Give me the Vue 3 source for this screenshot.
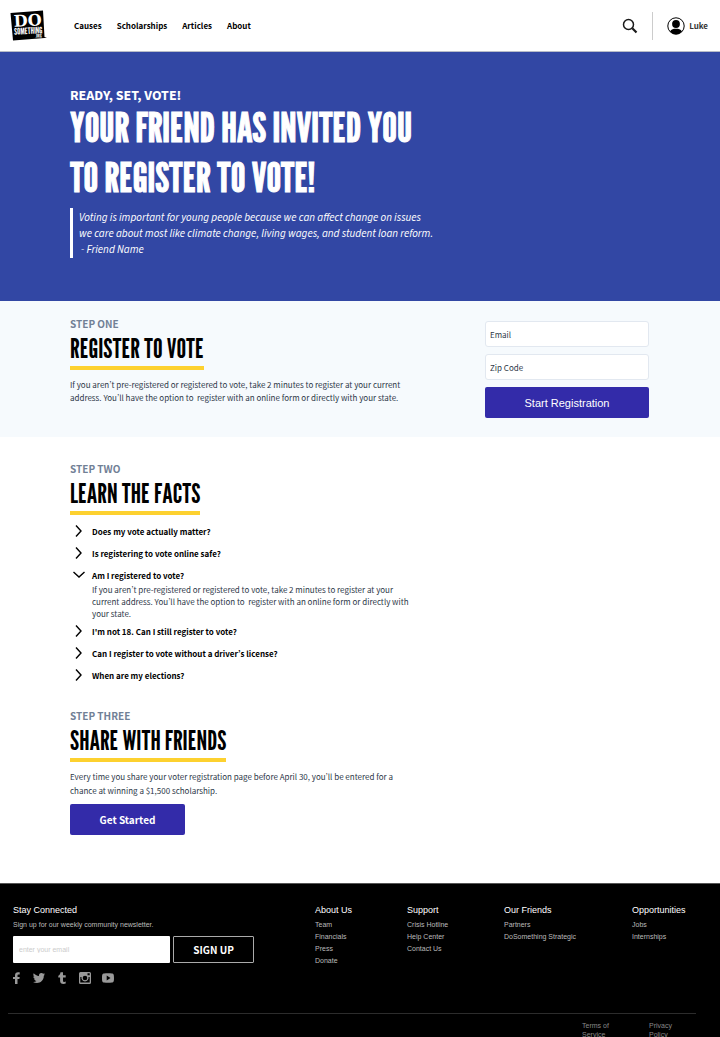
<script setup>
import { ref } from 'vue'

const navLinks = ['Causes', 'Scholarships', 'Articles', 'About']

const questions = [
  { title: 'Does my vote actually matter?' },
  { title: 'Is registering to vote online safe?' },
  {
    title: 'Am I registered to vote?',
    answer:
      'If you aren’t pre-registered or registered to vote, take 2 minutes to register at your current address. You’ll have the option to\u00a0 register with an online form or directly with your state.',
  },
  { title: "I'm not 18. Can I still register to vote?" },
  { title: 'Can I register to vote without a driver’s license?' },
  { title: 'When are my elections?' },
]
const openIndex = ref(2)
const toggle = (i) => {
  openIndex.value = openIndex.value === i ? -1 : i
}

const columns = [
  { title: 'About Us', links: ['Team', 'Financials', 'Press', 'Donate'] },
  { title: 'Support', links: ['Crisis Hotline', 'Help Center', 'Contact Us'] },
  { title: 'Our Friends', links: ['Partners', 'DoSomething Strategic'] },
  { title: 'Opportunities', links: ['Jobs', 'Internships'] },
]

const socials = [
  { name: 'Facebook', path: 'M5 12V7H3V5h2V3.500C5 1.500 6.200.300 8 .300h1.700v2.200H8.500c-.800 0-1 .400-1 1V5h2.200l-.300 2H7.500v5z' },
  { name: 'Twitter', path: 'M12 2.500l-1.200 1.300C10.900 8.500 7.500 11 4 11 2.500 11 1.200 10.600 0 9.900c1.300.100 2.600-.300 3.500-1C2.300 8.800 1.500 8 1.200 7h1.100C1 6.600.300 5.600.300 4.400l1.100.300C.300 3.800 0 2.500.700 1.300 2 2.900 3.800 3.800 6 3.900 5.700 2.200 6.900 1 8.400 1c.700 0 1.400.300 1.800.800l1.600-.600-1 1.400z' },
  { name: 'Tumblr', path: 'M4.500.200h2.500v3h2.700v2.300H7v2.900c0 1.200.600 1.500 1.300 1.500.500 0 1-.200 1.400-.400v2c-.600.300-1.300.500-2.200.500-2.200 0-3.400-1-3.400-3V5.500H2.300V3.700C3.500 3.300 4.300 2 4.500.200z' },
  { name: 'Instagram', path: 'M1.500 0h9A1.500 1.500 0 0 1 12 1.500v9a1.500 1.500 0 0 1-1.500 1.500h-9A1.500 1.500 0 0 1 0 10.500v-9A1.500 1.500 0 0 1 1.500 0zM8.500 1.300v2h2.200v-2zM1.300 5v5.500h9.400V5H9.500a3.600 3.600 0 1 1-7 0zM6 3.700a2.300 2.300 0 1 0 0 4.600 2.300 2.300 0 0 0 0-4.600z' },
  { name: 'YouTube', path: 'M2 1.500C4.500 1.100 7.500 1.100 10 1.500 11.500 1.700 12 2.500 12 6s-.500 4.300-2 4.500c-2.500.400-5.500.400-8 0C.500 10.300 0 9.500 0 6s.500-4.300 2-4.500zM4.700 3.600v4.800L8.500 6z' },
]
</script>

<template>
  <div class="page">
    <header class="topbar">
      <a href="#" class="logo" aria-label="DoSomething.org">
        <svg viewBox="0 0 38 32" width="38" height="32">
          <path d="M.500 3 33 .500 34.500 27l2.500.700-2.500.300L3 30.500z" fill="#000" />
          <g transform="rotate(-3 18 16)" fill="#fff">
            <text x="18" y="16" text-anchor="middle" class="logo-do">DO</text>
            <text x="18" y="24" text-anchor="middle" class="logo-small">SOMETHING</text>
            <text x="28" y="28" text-anchor="middle" class="logo-org">.ORG</text>
          </g>
        </svg>
      </a>
      <nav class="nav">
        <a v-for="link in navLinks" :key="link" href="#">{{ link }}</a>
      </nav>
      <button type="button" class="search" aria-label="Search">
        <svg viewBox="0 0 16 16" width="16" height="16" fill="none" stroke="#1a1a1a">
          <circle cx="6.500" cy="6.500" r="5" stroke-width="1.500" />
          <path d="M10.300 10.300 14.500 14.500" stroke-width="2.200" />
        </svg>
      </button>
      <a href="#" class="account">
        <svg viewBox="0 0 18 18" width="18" height="18">
          <circle cx="9" cy="9" r="8.200" fill="#fff" stroke="#000" />
          <circle cx="9" cy="7" r="3.900" />
          <path d="M3 14.500C4.500 12.200 6.300 11.800 9 11.800s4.500.400 6 2.700A8.200 8.200 0 0 1 9 17.200a8.200 8.200 0 0 1-6-2.700z" />
        </svg>
        <span>Luke</span>
      </a>
    </header>

    <section class="hero">
      <p class="kicker">READY, SET, VOTE!</p>
      <h1>YOUR FRIEND HAS INVITED YOU<br />TO REGISTER TO VOTE!</h1>
      <blockquote>
        Voting is important for young people because we can affect change on issues<br />
        we care about most like climate change, living wages, and student loan reform.<br />
        <span class="author">- Friend Name</span>
      </blockquote>
    </section>

    <section class="step register">
      <div class="copy">
        <p class="eyebrow">STEP ONE</p>
        <h2>REGISTER TO VOTE</h2>
        <p class="body">
          If you aren’t pre-registered or registered to vote, take 2 minutes to register at your current<br />
          address. You’ll have the option to&nbsp; register with an online form or directly with your state.
        </p>
      </div>
      <form class="form" @submit.prevent>
        <input type="email" placeholder="Email" aria-label="Email" />
        <input type="text" placeholder="Zip Code" aria-label="Zip Code" />
        <button type="submit" class="primary start">Start Registration</button>
      </form>
    </section>

    <section class="step facts">
      <p class="eyebrow">STEP TWO</p>
      <h2>LEARN THE FACTS</h2>
      <ul class="faq">
        <li v-for="(q, i) in questions" :key="q.title">
          <button type="button" :aria-expanded="openIndex === i" @click="toggle(i)">
            <svg viewBox="0 0 12 12" width="12" height="12" :class="{ open: openIndex === i }">
              <path d="M3 .500 8 6l-5 5.500" fill="none" stroke="#000" stroke-width="1.400" />
            </svg>
            <span>{{ q.title }}</span>
          </button>
          <p v-if="openIndex === i && q.answer" class="answer">{{ q.answer }}</p>
        </li>
      </ul>
    </section>

    <section class="step share">
      <p class="eyebrow">STEP THREE</p>
      <h2>SHARE WITH FRIENDS</h2>
      <p class="body">
        Every time you share your voter registration page before April 30, you’ll be entered for a<br />
        chance at winning a $1,500 scholarship.
      </p>
      <button type="button" class="primary get">Get Started</button>
    </section>

    <footer class="footer">
      <div class="footer-grid">
        <div>
          <h3>Stay Connected</h3>
          <label class="note" for="newsletter">Sign up for our weekly community newsletter.</label>
          <form class="signup" @submit.prevent>
            <input id="newsletter" type="email" placeholder="enter your email" />
            <button type="submit">SIGN UP</button>
          </form>
          <div class="socials">
            <a v-for="s in socials" :key="s.name" href="#" :aria-label="s.name">
              <svg viewBox="0 0 12 12" width="12" height="12">
                <path :d="s.path" fill="#999" fill-rule="evenodd" />
              </svg>
            </a>
          </div>
        </div>
        <div v-for="c in columns" :key="c.title">
          <h3>{{ c.title }}</h3>
          <ul>
            <li v-for="l in c.links" :key="l"><a href="#">{{ l }}</a></li>
          </ul>
        </div>
      </div>
      <div class="legal">
        <a href="#">Terms of Service</a>
        <a href="#">Privacy Policy</a>
      </div>
    </footer>
  </div>
</template>

<style>
body {
  margin: 0;
  background: #fff;
}
</style>

<style scoped>
.page {
  font-family: "Noto Sans CJK SC", "Noto Sans", sans-serif;
  font-feature-settings: "pwid";
  font-size: 8px;
  color: #2d3748;
}
p, h1, h2, h3, ul, blockquote {
  margin: 0;
  padding: 0;
}
ul {
  list-style: none;
}
a {
  color: inherit;
  text-decoration: none;
}
button {
  font-family: inherit;
  font-feature-settings: inherit;
  padding: 0;
  border: 0;
  background: none;
  cursor: pointer;
}
input {
  box-sizing: border-box;
  min-width: 0;
  font-family: inherit;
}
svg {
  display: block;
}

.topbar {
  display: flex;
  align-items: center;
  height: 51px;
  padding: 0 12px 0 10px;
  border-bottom: 1px solid #b8bcc8;
  color: #000;
  font-weight: 700;
}
.logo-do {
  font: 700 16px "DejaVu Serif", serif;
}
.logo-small {
  font: 400 9px "League Gothic", "Liberation Sans Narrow", sans-serif;
}
.logo-org {
  font: 400 5px "League Gothic", "Liberation Sans Narrow", sans-serif;
}
.nav {
  display: flex;
  flex: 1;
  gap: 15px;
  margin-left: 26px;
}
.search {
  padding-right: 14px;
}
.account {
  display: flex;
  align-items: center;
  gap: 4px;
  height: 28px;
  padding-left: 14px;
  border-left: 1px solid #ccc;
  color: #333;
}

.hero {
  padding: 39px 70px 43px;
  background: #3247a4;
  color: #fff;
}
.kicker {
  font-family: "Source Sans Pro", "Source Sans 3", "Noto Sans CJK SC", sans-serif;
  font-size: 14px;
  font-weight: 700;
  line-height: 11px;
}
h1, h2 {
  font-family: "League Gothic", "Liberation Sans Narrow", "Liberation Sans", sans-serif;
  font-weight: 400;
}
h1 {
  font-size: 41px;
  line-height: 50px;
  -webkit-text-stroke: 1px currentColor;
}
blockquote {
  margin-top: 6px;
  padding: 2px 0 0 6px;
  border-left: 3px solid #fff;
  font-family: "Source Sans Pro", "Source Sans 3", "Noto Sans CJK SC", sans-serif;
  font-size: 11px;
  font-style: italic;
  line-height: 16px;
}
.author {
  padding-left: 2px;
}

.step {
  padding: 0 70px;
}
.eyebrow {
  color: #718096;
  font-size: 10px;
  font-weight: 700;
  line-height: 14px;
}
h2 {
  width: max-content;
  border-bottom: 4px solid #fdd12f;
  color: #000;
  font-size: 27px;
  line-height: 35px;
}
.body {
  margin-top: 8px;
  line-height: 13px;
}
.primary {
  height: 31px;
  border-radius: 2px;
  background: #332ba9;
  color: #fff;
}
.register {
  display: flex;
  justify-content: space-between;
  padding-top: 16px;
  padding-right: 71px;
  padding-bottom: 19px;
  background: #f6fafd;
}
.form {
  display: flex;
  flex-direction: column;
  gap: 7px;
  width: 164px;
  padding-top: 4px;
}
.form input {
  height: 26px;
  padding: 0 4px;
  border: 1px solid #e2e8f0;
  border-radius: 3px;
  background: #fff;
  font-size: 8px;
}
.form input::placeholder {
  color: #2d3748;
  opacity: 1;
}
.start {
  font-family: "Liberation Sans", sans-serif;
  font-size: 11px;
}
.facts {
  padding-top: 25px;
}
.faq {
  display: flex;
  flex-direction: column;
  gap: 6px;
  margin-top: 8px;
}
.faq button {
  display: flex;
  align-items: center;
  gap: 7px;
  height: 16px;
  padding-left: 3px;
  color: #000;
  font-size: 8px;
  font-weight: 700;
}
.open {
  transform: rotate(90deg);
}
.answer {
  max-width: 325px;
  margin: 1px 0 -3px 22px;
  line-height: 12px;
}
.share {
  padding-top: 26px;
  padding-bottom: 48px;
}
.share .body {
  line-height: 14px;
}
.get {
  width: 115px;
  margin-top: 6px;
  font-size: 10px;
  font-weight: 700;
}

.footer {
  padding: 19px 24px 16px 8px;
  border-top: 1px solid #555;
  background: #000;
  color: #bbb;
  font-family: "Liberation Sans", sans-serif;
  font-size: 7px;
}
.footer-grid {
  display: grid;
  grid-template-columns: 302fr 92fr 97fr 128fr 64fr;
  padding-left: 5px;
  min-height: 110px;
  border-bottom: 1px solid #2c2c2c;
}
h3 {
  color: #fff;
  font-size: 9px;
  font-weight: 400;
  line-height: 15px;
}
.note {
  display: block;
  line-height: 14px;
}
.footer li {
  line-height: 12px;
}
.footer ul {
  padding-top: 1px;
}
.signup {
  display: flex;
  gap: 3px;
  margin-top: 4px;
}
.signup input {
  width: 157px;
  height: 27px;
  padding: 0 6px;
  border: 0;
  border-radius: 1px;
  background: #fff;
  font-size: 7px;
}
.signup input::placeholder {
  color: #ccc;
  opacity: 1;
}
.signup button {
  width: 81px;
  border: 1px solid #aaa;
  border-radius: 1px;
  color: #fff;
  font-family: "Noto Sans CJK SC", sans-serif;
  font-size: 10px;
  font-weight: 700;
}
.socials {
  display: flex;
  gap: 11px;
  margin-top: 9px;
  margin-left: -3px;
}
.legal {
  display: flex;
  justify-content: flex-end;
  gap: 32px;
  padding: 7px 12px 0 0;
  color: #888;
  line-height: 9px;
}
.legal a {
  width: 35px;
}
</style>
